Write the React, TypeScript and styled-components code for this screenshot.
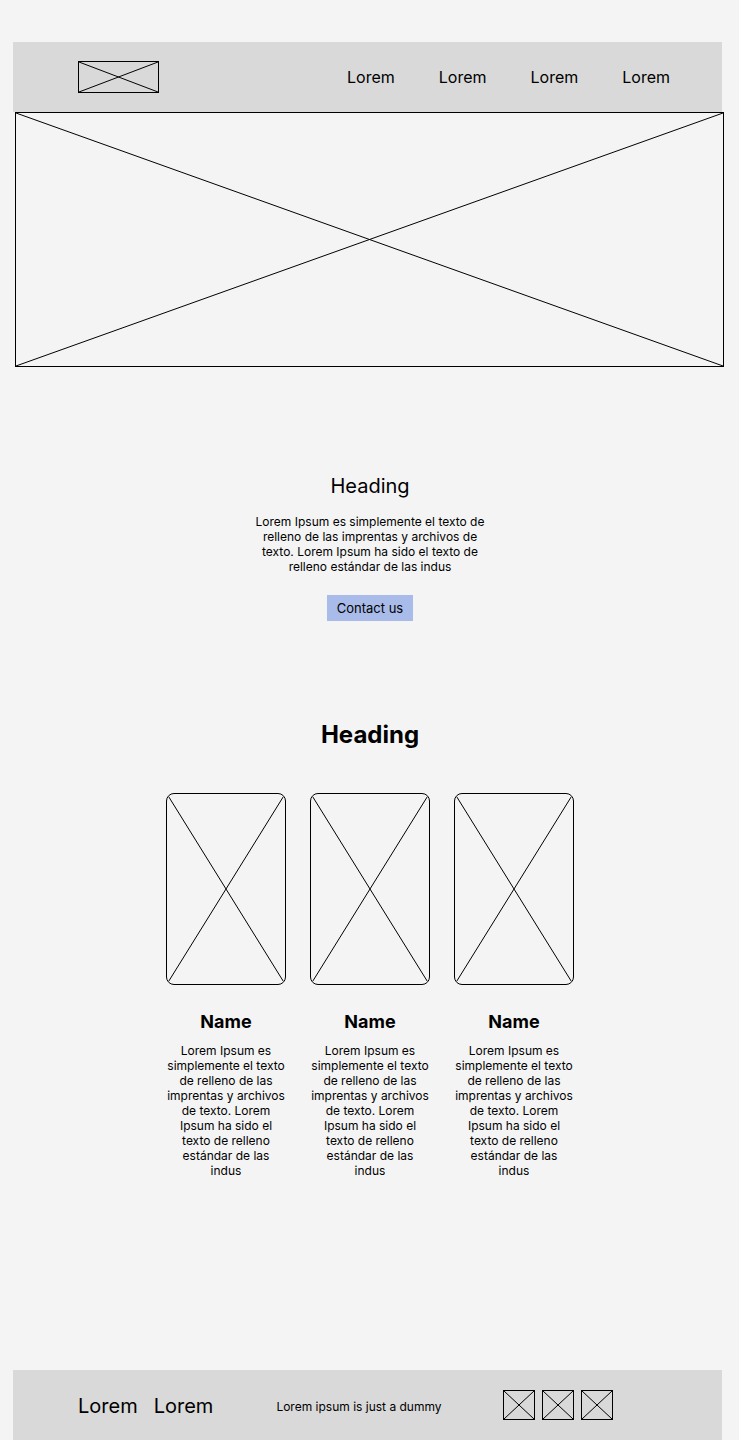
import styled, { createGlobalStyle } from "styled-components";

const GlobalStyle = createGlobalStyle`
  html, body {
    margin: 0;
    padding: 0;
    background: #f4f4f4;
    font-family: Inter, "Noto Sans", sans-serif;
    color: #000;
  }
`;

const Page = styled.div`
  width: 739px;
  padding: 42px 0 0 13px;
  box-sizing: border-box;
`;

const Header = styled.header`
  width: 709px;
  height: 70px;
  background: #d9d9d9;
  display: flex;
  align-items: center;
  justify-content: space-between;
  padding: 0 52px 0 65px;
  box-sizing: border-box;
`;

const Nav = styled.nav`
  display: flex;
  gap: 44px;
  font-size: 16px;
`;

const Placeholder = styled.div<{ $w: number; $h: number; $radius?: number }>`
  width: ${(p) => p.$w}px;
  height: ${(p) => p.$h}px;
  border: 1px solid #000;
  border-radius: ${(p) => p.$radius ?? 0}px;
  box-sizing: border-box;
  position: relative;
  overflow: hidden;
  flex-shrink: 0;

  svg {
    position: absolute;
    inset: 0;
    width: 100%;
    height: 100%;
  }
`;

const Hero = styled.div`
  margin-left: 2px;
`;

const Intro = styled.section`
  width: 714px;
  display: flex;
  flex-direction: column;
  align-items: center;
  padding-top: 107px;
`;

const IntroTitle = styled.h2`
  margin: 0;
  font-size: 20px;
  font-weight: 400;
  line-height: 24px;
`;

const IntroText = styled.p`
  margin: 16px 0 0;
  width: 240px;
  text-align: center;
  font-size: 12px;
  line-height: 15px;
`;

const Button = styled.button`
  margin-top: 21px;
  width: 86px;
  height: 26px;
  border: none;
  background: #a9bbe8;
  font-family: inherit;
  font-size: 13px;
  color: #000;
  padding: 0;
`;

const Team = styled.section`
  width: 714px;
  display: flex;
  flex-direction: column;
  align-items: center;
  padding-top: 99px;
`;

const TeamTitle = styled.h2`
  margin: 0;
  font-size: 24px;
  font-weight: 700;
  line-height: 30px;
`;

const Cards = styled.div`
  display: flex;
  gap: 24px;
  margin-top: 43px;
  margin-left: 0;
`;

const Card = styled.div`
  width: 120px;
  display: flex;
  flex-direction: column;
  align-items: center;
`;

const Name = styled.h3`
  margin: 26px 0 0;
  font-size: 18px;
  font-weight: 700;
  line-height: 22px;
`;

const CardText = styled.p`
  margin: 10px 0 0;
  text-align: center;
  font-size: 12px;
  line-height: 15px;
`;

const Footer = styled.footer`
  margin-top: 192px;
  width: 709px;
  height: 70px;
  background: #d9d9d9;
  display: flex;
  align-items: center;
  padding-left: 65px;
  box-sizing: border-box;
`;

const FooterLinks = styled.div`
  display: flex;
  gap: 16px;
  font-size: 20px;
  padding-top: 1px;
`;

const FooterText = styled.span`
  margin-left: 63px;
  font-size: 12px;
  padding-top: 2px;
`;

const Socials = styled.div`
  display: flex;
  gap: 7px;
  margin-left: 61px;
`;

function Cross({ inset = 0 }: { inset?: number }) {
  return (
    <svg viewBox="0 0 100 100" preserveAspectRatio="none">
      <line
        x1={inset}
        y1={inset}
        x2={100 - inset}
        y2={100 - inset}
        stroke="#000"
        strokeWidth="1"
        vectorEffect="non-scaling-stroke"
      />
      <line
        x1={100 - inset}
        y1={inset}
        x2={inset}
        y2={100 - inset}
        stroke="#000"
        strokeWidth="1"
        vectorEffect="non-scaling-stroke"
      />
    </svg>
  );
}

const cardText =
  "Lorem Ipsum es simplemente el texto de relleno de las imprentas y archivos de texto. Lorem Ipsum ha sido el texto de relleno estándar de las indus";

export default function App() {
  return (
    <>
      <GlobalStyle />
      <Page>
        <Header>
          <Placeholder $w={81} $h={32}>
            <Cross />
          </Placeholder>
          <Nav>
            <span>Lorem</span>
            <span>Lorem</span>
            <span>Lorem</span>
            <span>Lorem</span>
          </Nav>
        </Header>

        <Hero>
          <Placeholder $w={709} $h={255}>
            <Cross />
          </Placeholder>
        </Hero>

        <Intro>
          <IntroTitle>Heading</IntroTitle>
          <IntroText>
            Lorem Ipsum es simplemente el texto de relleno de las imprentas y
            archivos de texto. Lorem Ipsum ha sido el texto de relleno estándar
            de las indus
          </IntroText>
          <Button>Contact us</Button>
        </Intro>

        <Team>
          <TeamTitle>Heading</TeamTitle>
          <Cards>
            {[0, 1, 2].map((i) => (
              <Card key={i}>
                <Placeholder $w={120} $h={192} $radius={8}>
                  <Cross inset={1.5} />
                </Placeholder>
                <Name>Name</Name>
                <CardText>{cardText}</CardText>
              </Card>
            ))}
          </Cards>
        </Team>

        <Footer>
          <FooterLinks>
            <span>Lorem</span>
            <span>Lorem</span>
          </FooterLinks>
          <FooterText>Lorem ipsum is just a dummy</FooterText>
          <Socials>
            {[0, 1, 2].map((i) => (
              <Placeholder key={i} $w={32} $h={30}>
                <Cross />
              </Placeholder>
            ))}
          </Socials>
        </Footer>
      </Page>
    </>
  );
}
